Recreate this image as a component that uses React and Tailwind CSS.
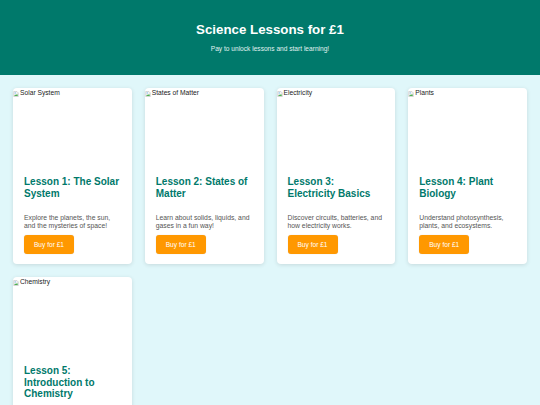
const lessons = [
  { img: 'Solar System', title: 'Lesson 1: The Solar System', desc: 'Explore the planets, the sun, and the mysteries of space!' },
  { img: 'States of Matter', title: 'Lesson 2: States of Matter', desc: 'Learn about solids, liquids, and gases in a fun way!' },
  { img: 'Electricity', title: 'Lesson 3: Electricity Basics', desc: 'Discover circuits, batteries, and how electricity works.' },
  { img: 'Plants', title: 'Lesson 4: Plant Biology', desc: 'Understand photosynthesis, plants, and ecosystems.' },
  { img: 'Chemistry', title: 'Lesson 5: Introduction to Chemistry', desc: 'Mix, react, and discover the world of chemicals!' },
];

const BrokenImage = () => (
  <svg width="6" height="6" viewBox="0 0 16 16" className="shrink-0 mt-[2px]">
    <path d="M2 1h8l4 4v10H2z" fill="#f3f3f3" stroke="#9a9a9a" strokeWidth="1" />
    <path d="M3 13l3-4 2 2 3-4 2 6z" fill="#4caf50" />
    <circle cx="6" cy="5" r="1.5" fill="#64b5f6" />
  </svg>
);

function LessonCard({ lesson }) {
  return (
    <div className="bg-white rounded-[4px] shadow-[0_1px_4px_rgba(0,0,0,0.12)] overflow-hidden flex flex-col">
      <div className="h-[77px] pt-[1px] flex items-start gap-[1px] text-[6.7px] leading-[8px] text-[#222]">
        <BrokenImage />
        <span>{lesson.img}</span>
      </div>
      <div className="px-[11px] pt-[11px] pb-[10px] flex flex-col">
        <h3 className="text-[10px] leading-[11.5px] font-bold text-[#00796b] mb-[15px]">{lesson.title}</h3>
        <p className="text-[6.8px] leading-[8px] text-[#555] mb-[5px]">{lesson.desc}</p>
        <button className="w-[50px] h-[19px] bg-[#ff9800] text-white text-[6.6px] rounded-[3px] shadow-[0_0_1px_rgba(0,0,0,0.2)]">
          Buy for £1
        </button>
      </div>
    </div>
  );
}

export default function App() {
  return (
    <div className="min-h-screen bg-[#e0f7fa] font-['Liberation_Sans',Arial,sans-serif]">
      <header className="h-[75px] bg-[#00796b] flex flex-col items-center justify-center text-center">
        <h1 className="text-[13.3px] leading-[15px] font-bold text-white mb-[8px]">Science Lessons for £1</h1>
        <p className="text-[6.6px] leading-[8px] text-[#e0f2f1]">Pay to unlock lessons and start learning!</p>
      </header>
      <main className="grid grid-cols-4 gap-[13px] p-[13px]">
        {lessons.map((l) => (
          <LessonCard key={l.img} lesson={l} />
        ))}
      </main>
    </div>
  );
}
